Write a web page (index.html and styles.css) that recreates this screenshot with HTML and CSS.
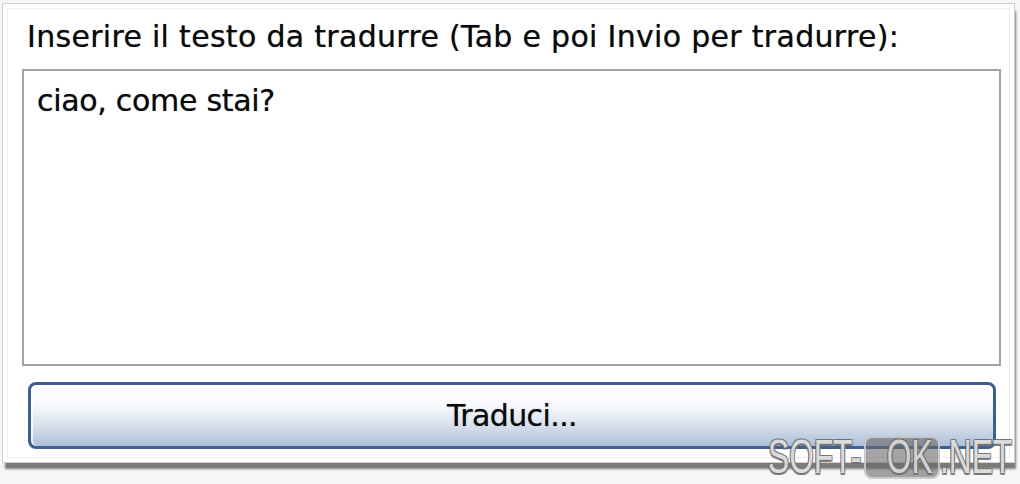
FILE: index.html
```html
<!DOCTYPE html>
<html lang="it">
<head>
<meta charset="utf-8">
<title>Traduci</title>
<link rel="stylesheet" href="styles.css">
</head>
<body>
<div class="window">
  <div class="inner">
    <div class="label">Inserire il testo da tradurre (Tab e poi Invio per tradurre):</div>
    <div class="textbox">ciao, come stai?</div>
    <div class="button">Traduci...</div>
  </div>
</div>
<div class="watermark"><span class="wm-text">SOFT-</span><span class="wm-box"><span class="wm-text">OK</span></span><span class="wm-text">.NET</span></div>
</body>
</html>
```
FILE: styles.css
```css
html, body {
  margin: 0;
  padding: 0;
}
body {
  width: 1020px;
  height: 484px;
  overflow: hidden;
  position: relative;
  background: #f6f6f6;
  font-family: "DejaVu Sans", Verdana, sans-serif;
  color: #0a0a0a;
}
.window {
  box-sizing: border-box;
  margin: 3px 0 0 2px;
  width: 1013px;
  height: 460px;
  border: 1px solid #cfcfcf;
  background: #fff;
  padding: 4px;
  box-shadow: 2px 7px 2px -1px rgba(0, 0, 0, 0.5);
}
.inner {
  box-sizing: border-box;
  height: 100%;
  border: 1px solid #eeeeee;
  display: flex;
  flex-direction: column;
}
.label,
.textbox,
.button {
  font-size: 30px;
  line-height: 36px;
  text-shadow: 0 0 0.8px rgba(0, 0, 0, 0.55);
}
.label {
  letter-spacing: 0.3px;
  padding: 10px 0 0 19px;
  white-space: nowrap;
}
.textbox {
  box-sizing: border-box;
  margin: 14px 8px 0 14px;
  height: 297px;
  border: 2px solid #a3a3a3;
  background: #fff;
  padding: 12px 13px;
  letter-spacing: -0.3px;
}
.button {
  box-sizing: border-box;
  margin: 16px 13px 0 20px;
  height: 67px;
  border: 3px solid #3d5f92;
  border-radius: 8px;
  background: linear-gradient(#ffffff 0%, #f6f8fb 35%, #dfe6f0 60%, #aebfd8 100%);
  box-shadow: inset 0 2px 0 #ffffff, inset 2px 0 0 rgba(255,255,255,0.8);
  display: flex;
  align-items: center;
  justify-content: center;
  letter-spacing: -0.6px;
}
.watermark {
  position: absolute;
  left: 768px;
  top: 435px;
  display: flex;
  align-items: center;
  font-family: "Liberation Sans", Arial, sans-serif;
}
.wm-text {
  display: inline-block;
  font-size: 48px;
  line-height: 44px;
  color: rgba(255, 255, 255, 0.75);
  text-shadow: 1.5px 1.5px 0 rgba(110,110,110,0.8), -1.5px -1.5px 0 rgba(110,110,110,0.8), 1.5px -1.5px 0 rgba(110,110,110,0.8), -1.5px 1.5px 0 rgba(110,110,110,0.8);
  transform: scaleX(0.66);
  transform-origin: left center;
  width: 96px;
}
.wm-text:last-child {
  width: 68px;
}
.wm-box {
  box-sizing: border-box;
  width: 76px;
  height: 43px;
  border: 2px solid rgba(215, 215, 215, 0.8);
  border-radius: 8px;
  background: rgba(105, 105, 105, 0.6);
  display: flex;
  align-items: center;
  justify-content: center;
}
.wm-box .wm-text {
  width: 46px;
  transform-origin: center;
  color: rgba(230, 230, 230, 0.85);
}
```
